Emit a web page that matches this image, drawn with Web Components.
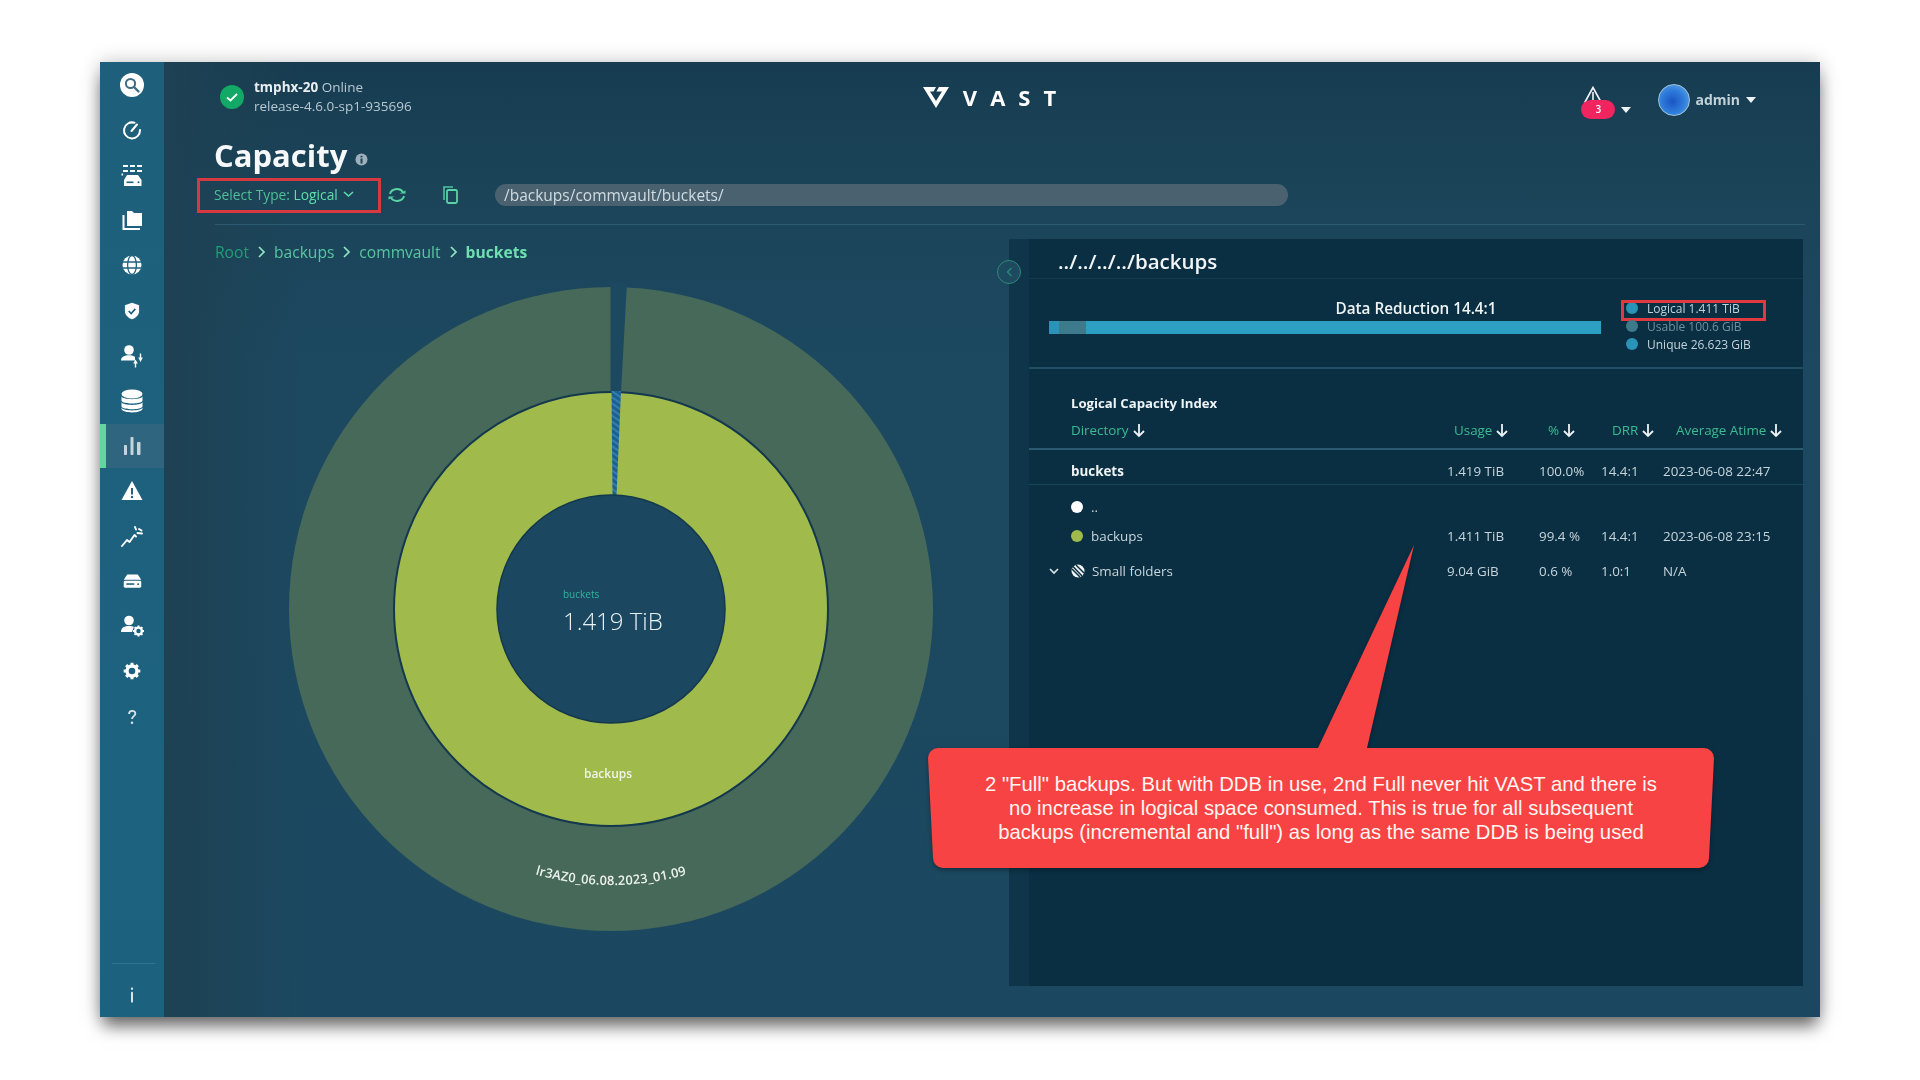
<!DOCTYPE html>
<html lang="en"><head><meta charset="utf-8"><title>Capacity</title>
<style>
html,body{margin:0;padding:0;background:#fff;width:1920px;height:1080px;overflow:hidden}
body{font-family:"Open Sans","Liberation Sans",sans-serif}
</style></head><body>
<vast-app></vast-app>
<script>
const ICONS={
search:'<circle cx="12" cy="12" r="12" fill="#fff"/><circle cx="10.5" cy="10.5" r="4.6" fill="none" stroke="#3f6c84" stroke-width="2"/><path d="M14 14l4.5 4.5" stroke="#3f6c84" stroke-width="2.4" stroke-linecap="round"/>',
gauge:'<path d="M14.5 4.8A8 8 0 1 0 20 12" fill="none" stroke="#fff" stroke-width="2" stroke-linecap="round"/><path d="M11.5 13L17 6.5" stroke="#fff" stroke-width="2" stroke-linecap="round"/>',
rack:'<g fill="#fff"><rect x="3" y="2" width="5" height="2"/><rect x="10" y="2" width="5" height="2"/><rect x="17" y="2" width="5" height="2"/><rect x="3" y="7" width="5" height="2"/><rect x="10" y="7" width="5" height="2"/><rect x="17" y="7" width="5" height="2"/><rect x="1.5" y="10.5" width="1.6" height="2"/><path d="M7 12h11l3.500 5v6H4v-6z"/></g><rect x="6.5" y="18.500" width="7" height="1.600" fill="#1e6180"/><circle cx="18.500" cy="19.300" r="1" fill="#1e6180"/>',
folder:'<path d="M7 3h5l2 2h8v13H7z" fill="#fff"/><path d="M3.5 7v14H20" fill="none" stroke="#fff" stroke-width="2"/>',
globe:'<circle cx="12" cy="12" r="9.5" fill="#fff"/><g fill="none" stroke="#1e6180" stroke-width="1.3"><ellipse cx="12" cy="12" rx="4.4" ry="9.5"/><path d="M2.5 9h19M2.5 15h19"/></g>',
shield:'<path d="M12 2l8.5 3v7c0 5-3.500 8-8.500 10-5-2-8.500-5-8.500-10V5z" fill="#fff"/><path d="M8 12l3 3 5-5.500" fill="none" stroke="#1e6180" stroke-width="2"/>',
userio:'<circle cx="9" cy="6" r="4.800" fill="#fff"/><path d="M1 16.500c0-3.800 3.500-5.200 8-5.200 2.800 0 4.800.6 6 1.500v3.700z" fill="#fff"/><path d="M15.500 18.500v5M20.500 9.500v6" stroke="#fff" stroke-width="1.400"/><path d="M15.500 15.500l-2.300 4h4.600zM20.500 18l-2.300-4.500h4.600z" fill="#fff"/>',
db:'<g fill="#fff"><ellipse cx="12" cy="5" rx="10.500" ry="4.500"/><path d="M1.500 7.500C3 11 21 11 22.500 7.500v4.300c-1.500 3.700-19.500 3.700-21 0z"/><path d="M1.500 13.300c1.500 3.500 19.500 3.500 21 0v4.200c-1.500 3.700-19.500 3.700-21 0z"/><path d="M1.500 18.800c1.500 3.500 19.500 3.500 21 0v1.200c-1.500 4.500-19.500 4.500-21 0z"/></g>',
bars:'<g fill="#c5d5dc"><rect x="4" y="11" width="3" height="10" rx=".8"/><rect x="10.500" y="3" width="3" height="18" rx=".8"/><rect x="17" y="8" width="3.500" height="13" rx=".8"/></g>',
warn:'<path d="M12 2l10.500 19h-21z" fill="#fff"/><path d="M12 9v6.500" stroke="#1e6180" stroke-width="2"/><circle cx="12" cy="18" r="1.200" fill="#1e6180"/>',
trend:'<path d="M2 22l5-6 2.500 2L14.500 11l1.500 1.500" fill="none" stroke="#fff" stroke-width="1.900" stroke-linecap="round" stroke-linejoin="round"/><path d="M15 3l1 2.500M19 5l2.500 1.500M17.500 9L22 9.500" stroke="#fff" stroke-width="1.900" stroke-linecap="round"/>',
drive:'<path d="M6 4h12l4 6H2z" fill="#fff"/><rect x="2" y="11" width="20" height="8" rx="1.500" fill="#fff"/><rect x="5" y="14" width="9" height="1.800" fill="#1e6180"/><circle cx="18.500" cy="15" r="1.100" fill="#1e6180"/>',
usergear:'<circle cx="9" cy="6.500" r="4.800" fill="#fff"/><path d="M1 18c0-4.500 3.500-6 8-6 2 0 3.500.3 4.800.9L12 18z" fill="#fff"/><g transform="translate(18.500 17)"><circle r="3.400" fill="none" stroke="#fff" stroke-width="2.400"/><path d="M0-5.500v2M0 3.500v2M-5.500 0h2M3.500 0h2M-3.900-3.900l1.400 1.400M2.500 2.500l1.400 1.400M-3.900 3.900l1.400-1.400M2.500-2.500l1.400-1.400" stroke="#fff" stroke-width="2"/></g>',
gear:'<g transform="translate(12 12)"><circle r="6" fill="none" stroke="#fff" stroke-width="4"/><path d="M0-10v4M0 6v4M-10 0h4M6 0h4M-7-7l3 3M4 4l3 3M-7 7l3-3M4-4l3-3" stroke="#fff" stroke-width="3.600"/></g>',
help:'<path d="M8.500 8.500c0-5 7.500-5 7.500-.5 0 3-4 3-4 6.500" fill="none" stroke="#d9e5ea" stroke-width="2.200"/><circle cx="12" cy="19" r="1.500" fill="#d9e5ea"/>'
};
function el(name,html,extra){
  class E extends HTMLElement{
    constructor(){super();const r=this.attachShadow({mode:'open'});r.innerHTML=typeof html==='function'?html(this):html;}
    connectedCallback(){if(extra)extra(this)}
  }
  customElements.define(name,E);
}
el('nav-item',()=>`<style>
:host{display:flex;align-items:center;justify-content:center;height:45.2px;box-sizing:border-box;position:relative}
:host([active]){background:#2f657f;border-left:6px solid #62d6a0;padding-right:6px;height:44.6px}
svg{display:block}
</style><svg id="i" viewBox="0 0 24 24"></svg>`,h=>{
  const s=h.shadowRoot.getElementById('i'),z=h.getAttribute('size')||24;s.setAttribute('width',z);s.setAttribute('height',z);s.innerHTML=ICONS[h.getAttribute('icon')];
});
el('side-nav',`<style>
:host{display:flex;flex-direction:column;background:linear-gradient(#1e607c,#1c627f);height:100%}
.foot{margin-top:auto;border-top:1px solid #2f7692;margin-left:12px;margin-right:9px;height:53px;display:flex;align-items:center;justify-content:center}
svg{display:block;margin:8px 0 0 -3px}
</style><slot></slot><div class="foot"><svg width="20" height="20" viewBox="0 0 24 24"><rect x="10.800" y="8" width="2.400" height="13" rx="1" fill="#d9e5ea"/><circle cx="12" cy="4.500" r="1.400" fill="#d9e5ea"/></svg></div>`);
el('status-line',`<style>
:host{display:flex;align-items:center;gap:10px;font-size:13.500px;line-height:19.500px;color:#b9c9d1}
svg{display:block;flex:none}
b{color:#e8eef1;font-weight:700}
</style><svg width="24" height="24" viewBox="0 0 24 24"><circle cx="12" cy="12" r="12" fill="#12a865"/><path d="M7 12.500l3.500 3L17 9" fill="none" stroke="#fff" stroke-width="1.800"/></svg><div><b>tmphx-20</b> Online<br>release-4.6.0-sp1-935696</div>`);
el('vast-logo',`<style>
:host{display:flex;align-items:center;gap:14px;position:relative;height:24px;margin-left:-61px;color:#fff}
span{font:700 22px/24px "Open Sans",sans-serif;letter-spacing:13px;margin-right:-13px}
svg{display:block}
i{position:absolute;left:85px;top:15px;width:11px;height:3px;background:#183e53}
</style><svg width="26" height="21" viewBox="0 0 26 21"><path fill="#fff" fill-rule="evenodd" d="M0 0H26L13 21ZM7 4.500H19L13 14Z"/><path d="M15 -1L11.500 5.500" stroke="#183e53" stroke-width="2.600"/></svg><span>VAST</span><i></i>`);
el('user-area',`<style>
:host{display:flex;align-items:flex-start;justify-content:flex-end;padding-right:64px;color:#c3d2d9;font:700 14px/20px "Open Sans",sans-serif}
.alert{position:relative;width:45px;height:36px;margin-top:2px}
.alert svg{position:absolute;left:2px;top:0}
.badge{position:absolute;left:0;top:14px;width:34px;height:19px;border-radius:10px;background:#f0245f;color:#fff;font:600 10px/19px "Open Sans",sans-serif;text-align:center}
.c{width:0;height:0;border:5px solid transparent;border-top:6px solid #eef3f5;border-bottom:0}
.alert .c{position:absolute;left:40px;top:21px}
.av{width:32px;height:32px;border-radius:50%;margin:0 5px 0 32px;box-sizing:border-box;border:1.500px solid #9fc4dc;background:radial-gradient(circle at 45% 55%,#1a55c4 0,#2f7edb 50%,#6fb2e6 100%)}
.n{line-height:32px;display:flex;align-items:center;gap:6px}
</style><div class="alert"><svg width="24" height="20" viewBox="0 0 24 20"><path d="M10 1.500L2 16h16zM10 6v8" fill="none" stroke="#f1f5f7" stroke-width="1.600"/></svg><div class="badge">3</div><div class="c"></div></div><div class="av"></div><div class="n">admin <div class="c"></div></div>`);
el('top-bar',`<style>
:host{display:grid;grid-template-columns:1fr auto 1fr;align-items:center;height:70px;padding:0 0 0 56px;box-sizing:border-box;margin-top:0}
::slotted(status-line){margin-top:0}
::slotted(user-area){margin-top:12px}
</style><slot></slot>`);
el('page-title',`<style>
:host{display:flex;align-items:center;gap:8px;height:46px;color:#fff;padding-left:50px}
h1{margin:0;font:700 31px/46px "Open Sans",sans-serif;color:#f6f8f9}
svg{display:block;margin-top:9px}
</style><h1>Capacity</h1><svg width="13" height="13" viewBox="0 0 13 13"><circle cx="6.500" cy="6.500" r="6" fill="#9fb0ba"/><rect x="5.500" y="5.500" width="2" height="5" fill="#1e4359"/><rect x="5.500" y="2.800" width="2" height="1.600" fill="#1e4359"/></svg>`);
el('tool-bar',`<style>
:host{display:flex;align-items:center;height:35px;padding:0 32px 0 33px;color:#57cfa3;font-size:13.800px}
.sel{box-sizing:border-box;width:184px;height:35px;border:3px solid #d63a40;padding:0 0 2px 14px;display:flex;align-items:center;gap:5px;white-space:pre}
.sel b{font-weight:500;color:#62dcaa}
.sel span{color:#4ebf97}
svg{display:block;flex:none}
.r{margin-left:7px;margin-top:-2px}.k{margin-left:36px;margin-top:-2px}
.path{margin:-2px 0 0 35px;width:793px;height:22px;border-radius:11px;background:#4a6270;color:#cfdce2;font:15.500px/22px "Open Sans",sans-serif;padding-left:9px;box-sizing:border-box}
</style><div class="sel"><div><span>Select Type: </span><b>Logical</b></div><svg width="11" height="7" viewBox="0 0 11 7"><path d="M1 1l4.500 4L10 1" fill="none" stroke="#62dcaa" stroke-width="1.600"/></svg></div>
<svg class="r" width="18" height="18" viewBox="0 0 18 18"><path d="M2 8C3 3 11 1 15 6M16 10c-1 5-9 7-13 2" fill="none" stroke="#5ad3a4" stroke-width="1.900"/><path d="M11.500 7.500h6V4.500zM6.500 10.500h-6v3z" fill="#5ad3a4"/></svg>
<svg class="k" width="18" height="20" viewBox="0 0 18 20"><path d="M2 15V2h9" fill="none" stroke="#4fc49a" stroke-width="1.600"/><rect x="5" y="5" width="10" height="13" rx="1.500" fill="none" stroke="#5ad3a4" stroke-width="1.800"/></svg>
<div class="path">/backups/commvault/buckets/</div>`);
el('crumb-trail',`<style>
:host{display:flex;align-items:center;height:20px;margin-top:17px;font:15.600px/20px "Open Sans",sans-serif;color:#58c6a0;white-space:nowrap}
.root{color:#1f9f79}
svg{display:block;margin:0 8px}
b{font-weight:700;color:#6ee0b0}
</style><span class="root">Root</span><svg width="9" height="12" viewBox="0 0 9 12"><path d="M2 1l5 5-5 5" fill="none" stroke="#8fe6c4" stroke-width="1.700"/></svg><span>backups</span><svg width="9" height="12" viewBox="0 0 9 12"><path d="M2 1l5 5-5 5" fill="none" stroke="#8fe6c4" stroke-width="1.700"/></svg><span>commvault</span><svg width="9" height="12" viewBox="0 0 9 12"><path d="M2 1l5 5-5 5" fill="none" stroke="#8fe6c4" stroke-width="1.700"/></svg><b>buckets</b>`);
el('sun-burst',`<style>
:host{display:block;width:644px;height:644px;margin:25px 0 0 73.500px}
svg{display:block;overflow:visible}
text{font-family:"Open Sans",sans-serif}
</style><svg width="644" height="644" viewBox="-322 -322 644 644">
<defs><pattern id="st" width="5" height="5" patternUnits="userSpaceOnUse" patternTransform="rotate(35)"><rect width="5" height="5" fill="#1f5f8b"/><rect width="5" height="2" fill="#2f7fb4"/></pattern>
<path id="arc" d="M-276 0A276 276 0 0 0 276 0"/></defs>
<circle r="322" fill="#46695a"/>
<path d="M-.5-326H16L10-217H-.5z" fill="#1d4960"/>
<circle r="217" fill="#a0ba4b" stroke="#14384d" stroke-width="2"/>
<path d="M.5-218H10L5.500-113H1.500z" fill="url(#st)"/>
<circle r="114" fill="#1b4860" stroke="#14384d" stroke-width="1.500"/>
<text x="-48" y="-11" font-size="10" fill="#2fb59d">buckets</text>
<text x="-48" y="21" font-size="24" font-weight="300" fill="#e9f0f2">1.419 TiB</text>
<text x="-3" y="169" font-size="12" font-weight="600" fill="#f1f4ee" text-anchor="middle">backups</text>
<text font-size="12.800" font-weight="600" fill="#eef2ee" letter-spacing=".2"><textPath href="#arc" startOffset="50%" text-anchor="middle">lr3AZ0_06.08.2023_01.09</textPath></text>
</svg>`);
el('sort-head',`<style>
:host{display:flex;align-items:center;gap:3px;color:#3bbc92;white-space:nowrap}
svg{display:block;flex:none}
</style><slot></slot><svg width="14" height="15" viewBox="0 0 14 15"><path d="M7 1v12M2 8l5 5 5-5" fill="none" stroke="#eef3f5" stroke-width="1.800"/></svg>`);
el('cap-row',`<style>
:host{display:grid;grid-template-columns:376px 92px 62px 62px 140px;align-items:center;height:var(--h,30px);padding-left:42px;font-size:13.400px;color:#c7d4da;white-space:nowrap;box-sizing:border-box}
</style><slot></slot>`);
el('cap-dot',`<style>
:host{display:inline-block;width:12px;height:12px;border-radius:50%;background:var(--c,#fff);margin-right:8px;vertical-align:-1px}
</style>`);
el('cap-panel',`<style>
:host{display:grid;grid-template-columns:20px 1fr;position:relative;background:#0a2f43;height:747px;margin-top:14px;margin-right:17px;color:#e5ecef;font-size:13px}
.strip{background:#0e3549}
.title{height:40px;padding-left:29px;font:600 20.500px/45px "Open Sans",sans-serif;color:#f2f6f7;box-sizing:border-box;border-bottom:1px solid #123a50}
.dr{display:grid;grid-template-columns:552px auto;height:90px;padding-left:20px;border-bottom:2px solid #204e64;box-sizing:border-box}
.drt{font:600 15.300px/20px "Open Sans",sans-serif;text-align:center;padding:19px 0 3px 182px;color:#eef3f5}
.bar{display:flex;height:13px;background:#2d9fc3}
.bar i{display:block}
.leg{padding:20px 0 0 25px;font-size:12px}
.leg div{display:flex;align-items:center;height:18px;gap:9px;color:#c3d2d9;position:relative}
.leg u{display:block;width:12px;height:12px;border-radius:50%;background:#2a93b8}
.leg .dim{color:#6f909e}.leg .dim u{background:#3c7a8c}
.red{position:absolute;left:-5px;top:1px;width:145px;height:21px;box-sizing:border-box;border:3px solid #de3a40}
.lci{height:44px;padding:24px 0 0 42px;font:700 13.200px/20px "Open Sans",sans-serif;box-sizing:border-box;color:#eef3f5}
.hd{--h:37px;border-bottom:2px solid #2c5a70;padding-bottom:1px}
.hd sort-head:nth-of-type(2){padding-left:7px}.hd sort-head:nth-of-type(3){padding-left:9px}.hd sort-head:nth-of-type(4){padding-left:11px}.hd sort-head:nth-of-type(5){padding-left:13px}
.tot{--h:35px;padding-top:7px;border-bottom:1px solid #1b465c}
.tot b{color:#eef3f5}
.list{padding-top:8px}
.n{position:relative}
.chev{position:absolute;left:-22px;top:6px}
.sm{display:inline-block;vertical-align:-2px;margin-right:7px}
.pad{position:absolute;left:-12px;top:21px;width:24px;height:24px;box-sizing:border-box;border:1.500px solid #2c8a7a;border-radius:50%;background:#1d4a5f;display:flex;align-items:center;justify-content:center}
</style>
<div class="strip"></div>
<div>
 <div class="title">../../../../backups</div>
 <div class="dr"><div><div class="drt">Data Reduction 14.4:1</div><div class="bar"><i style="width:10px;background:#2a93b8"></i><i style="width:27px;background:#3c7a8c"></i></div></div>
  <div class="leg"><div><u></u>Logical 1.411 TiB<span class="red"></span></div><div class="dim"><u></u>Usable 100.6 GiB</div><div><u></u>Unique 26.623 GiB</div></div></div>
 <div class="lci">Logical Capacity Index</div>
 <cap-row class="hd"><sort-head>Directory</sort-head><sort-head>Usage</sort-head><sort-head>%</sort-head><sort-head>DRR</sort-head><sort-head>Average Atime</sort-head></cap-row>
 <cap-row class="tot"><b>buckets</b><span>1.419 TiB</span><span>100.0%</span><span>14.4:1</span><span>2023-06-08 22:47</span></cap-row>
 <div class="list">
 <cap-row style="--h:28px"><span><cap-dot></cap-dot>..</span></cap-row>
 <cap-row style="--h:30px"><span><cap-dot style="--c:#a0ba4b"></cap-dot>backups</span><span>1.411 TiB</span><span>99.4 %</span><span>14.4:1</span><span>2023-06-08 23:15</span></cap-row>
 <cap-row style="--h:40px"><span class="n"><svg class="chev" width="10" height="7" viewBox="0 0 10 7"><path d="M1 1l4 4 4-4" fill="none" stroke="#dfe8ec" stroke-width="1.600"/></svg><svg class="sm" width="14" height="14" viewBox="0 0 14 14"><circle cx="7" cy="7" r="6.500" fill="#f2f5f6"/><path d="M2 2.500l9 9.500M5 1l8 8M1 5l8 8" stroke="#0a2f43" stroke-width="1.500"/></svg>Small folders</span><span>9.04 GiB</span><span>0.6 %</span><span>1.0:1</span><span>N/A</span></cap-row>
 </div>
</div>
<div class="pad"><svg width="7" height="10" viewBox="0 0 7 10"><path d="M5.500 1L1.500 5l4 4" fill="none" stroke="#2c8a7a" stroke-width="1.300"/></svg></div>`);
el('callout-note',`<style>
:host{position:absolute;left:828px;top:483px;width:786px;height:323px;display:block;font:20.300px/24px "Liberation Sans",Arial,sans-serif;color:#fff5f2}
svg{position:absolute;left:0;top:0;filter:drop-shadow(0 2px 2px rgba(0,0,0,.35))}
div{position:absolute;left:0;right:0;top:203px;height:120px;display:flex;flex-direction:column;align-items:center;justify-content:center;white-space:nowrap;text-align:center}
</style><svg width="786" height="323" viewBox="0 0 786 323"><path fill="#f74343" d="M10 203H390L486 0 439 203H776a10 10 0 0 1 10 10L781 313a10 10 0 0 1-10 10H15a10 10 0 0 1-10-10L0 213a10 10 0 0 1 10-10z"/></svg><div><span>2 "Full" backups. But with DDB in use, 2nd Full never hit VAST and there is</span><span>no increase in logical space consumed. This is true for all subsequent</span><span>backups (incremental and "full") as long as the same DDB is being used</span></div>`);
el('vast-app',`<style>
:host{display:block;position:relative;margin:62px 0 0 100px;width:1720px;height:955px;box-shadow:0 12px 16px -3px rgba(0,0,0,.55),0 0 18px rgba(0,0,0,.22);font-family:"Open Sans","Liberation Sans",sans-serif}
.win{display:grid;grid-template-columns:64px 1fr;height:100%;filter:blur(.45px)}
main{background:linear-gradient(90deg,#1e4153 0,rgba(30,65,83,0) 140px),linear-gradient(#173c51 0,#1b4459 130px,#1c4860 300px,#1b4860 100%);min-width:0}
.rule{height:1px;background:#2c5a70;margin:11px 15px 0 51px}
.content{display:grid;grid-template-columns:794px 1fr;padding-left:51px}
</style><div class="win">
<side-nav>
<nav-item icon="search"></nav-item><nav-item icon="gauge"></nav-item><nav-item icon="rack"></nav-item><nav-item icon="folder"></nav-item><nav-item icon="globe"></nav-item><nav-item icon="shield" size="20"></nav-item><nav-item icon="userio"></nav-item><nav-item icon="db"></nav-item><nav-item icon="bars" active></nav-item><nav-item icon="warn"></nav-item><nav-item icon="trend"></nav-item><nav-item icon="drive" size="21"></nav-item><nav-item icon="usergear"></nav-item><nav-item icon="gear" size="20"></nav-item><nav-item icon="help" size="20"></nav-item>
</side-nav>
<main>
<top-bar><status-line></status-line><vast-logo></vast-logo><user-area></user-area></top-bar>
<page-title></page-title>
<tool-bar></tool-bar>
<div class="rule"></div>
<div class="content"><div><crumb-trail></crumb-trail><sun-burst></sun-burst></div><cap-panel></cap-panel></div>
</main></div>
<callout-note></callout-note>`);
</script>
</body></html>
